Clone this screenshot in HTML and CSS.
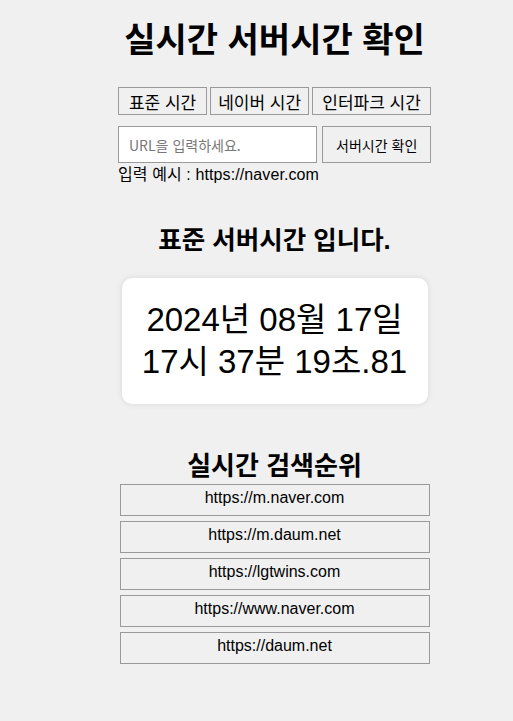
FILE: index.html
```html
<!DOCTYPE html>
<html lang="ko">
<head>
<meta charset="utf-8">
<title>실시간 서버시간 확인</title>
<link rel="stylesheet" href="styles.css">
</head>
<body>
<main class="page">
  <h1 class="title">실시간 서버시간 확인</h1>
  <section class="controls">
    <div class="tabs">
      <button class="tab tab-std">표준 시간</button>
      <button class="tab tab-naver">네이버 시간</button>
      <button class="tab tab-park">인터파크 시간</button>
    </div>
    <div class="search">
      <input class="url-input" type="text" placeholder="URL을 입력하세요.">
      <button class="check-btn">서버시간 확인</button>
    </div>
    <p class="hint">입력 예시 : https://naver.com</p>
  </section>
  <h2 class="subtitle">표준 서버시간 입니다.</h2>
  <div class="clock">
    <div class="clock-line">2024년 08월 17일</div>
    <div class="clock-line">17시 37분 19초.81</div>
  </div>
  <h2 class="rank-title">실시간 검색순위</h2>
  <ul class="rank-list">
    <li class="rank-item">https://m.naver.com</li>
    <li class="rank-item">https://m.daum.net</li>
    <li class="rank-item">https://lgtwins.com</li>
    <li class="rank-item">https://www.naver.com</li>
    <li class="rank-item">https://daum.net</li>
  </ul>
</main>
</body>
</html>
```

FILE: styles.css
```css
html, body {
  margin: 0;
  padding: 0;
  background: #f0f0f0;
}

body {
  font-family: "Liberation Sans", Arial, "Noto Sans CJK KR", sans-serif;
  color: #000;
}

.page {
  display: flex;
  flex-direction: column;
  align-items: center;
  padding-left: 36px;
}

.title {
  margin: 20px 0 0;
  font-size: 34px;
  line-height: 40px;
  font-weight: bold;
}

.controls {
  width: 313px;
  margin-top: 27px;
}

.tabs {
  display: flex;
  gap: 3px;
}

.tab {
  height: 28px;
  padding: 0;
  border: 1px solid #9a9a9a;
  background: #f0f0f0;
  font-family: "Noto Sans CJK KR", sans-serif;
  font-size: 17px;
  color: #000;
}

.tab-std { width: 90px; }
.tab-naver { width: 100px; }
.tab-park { width: 120px; }

.search {
  display: flex;
  gap: 5px;
  margin-top: 11px;
}

.url-input {
  box-sizing: border-box;
  width: 200px;
  height: 37px;
  margin: 0;
  padding: 0 10px;
  border: 1px solid #9a9a9a;
  background: #fff;
  font-family: "Noto Sans CJK KR", sans-serif;
  font-size: 14px;
}

.url-input::placeholder {
  color: #777;
}

.check-btn {
  box-sizing: border-box;
  width: 109px;
  height: 37px;
  padding: 0;
  border: 1px solid #9a9a9a;
  background: #f0f0f0;
  font-family: "Noto Sans CJK KR", sans-serif;
  font-size: 14px;
  color: #000;
}

.hint {
  margin: 2px 0 0;
  font-size: 16px;
  line-height: 20px;
  letter-spacing: 0.1px;
}

.subtitle {
  margin: 40px 0 0;
  font-size: 25.5px;
  line-height: 30px;
  font-weight: bold;
}

.clock {
  box-sizing: border-box;
  width: 306px;
  margin-top: 23px;
  padding: 21px 0;
  background: #fff;
  border-radius: 10px;
  box-shadow: 0 0 6px rgba(0, 0, 0, 0.1);
  text-align: center;
  font-size: 33px;
  line-height: 42px;
}

.rank-title {
  margin: 46px 0 0;
  font-size: 26px;
  line-height: 32px;
  font-weight: bold;
}

.rank-list {
  list-style: none;
  margin: 2px 0 0;
  padding: 0;
  width: 310px;
  display: flex;
  flex-direction: column;
  gap: 5px;
}

.rank-item {
  box-sizing: border-box;
  height: 32px;
  padding-top: 3px;
  border: 1px solid #9a9a9a;
  text-align: center;
  font-size: 16px;
  line-height: 20px;
}
```
